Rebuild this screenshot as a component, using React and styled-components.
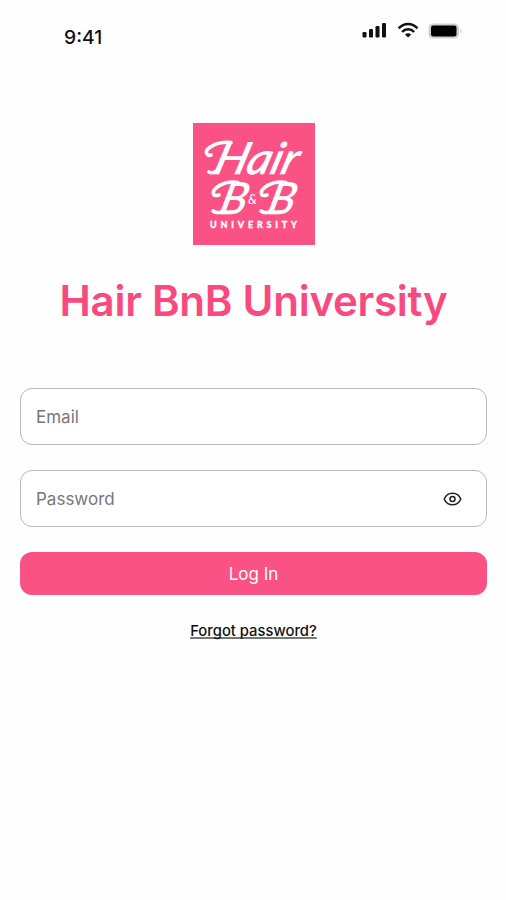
import React, { useState } from "react";
import styled, { createGlobalStyle } from "styled-components";

const GlobalStyle = createGlobalStyle`
  * {
    box-sizing: border-box;
  }

  body {
    margin: 0;
    background-color: #fefefe;
    font-family: Inter, "Liberation Sans", sans-serif;
  }
`;

const Screen = styled.main`
  display: flex;
  flex-direction: column;
  height: 900px;
  width: 506px;
  background-color: #fefefe;
`;

const StatusBar = styled.header`
  display: flex;
  justify-content: space-between;
  height: 123px;
  padding: 20px 44px 0 64px;
`;

const Clock = styled.div`
  padding-top: 5px;
  font-size: 19.3px;
  font-weight: 500;
  line-height: 24px;
  color: #111;
`;

const Brand = styled.div`
  display: flex;
  flex-direction: column;
  align-items: center;
  height: 265px;
  padding-left: 1px;

  h1 {
    margin: 30px 0 0;
    font-size: 42px;
    font-weight: 600;
    line-height: 52px;
    white-space: nowrap;
    letter-spacing: -0.25px;
    color: #f94a80;
  }
`;

const LoginForm = styled.form`
  display: flex;
  flex-direction: column;
  padding: 0 19px 0 20px;
`;

const Field = styled.label`
  display: flex;
  align-items: center;
  height: 57px;
  margin-bottom: 25px;
  padding: 0 24px 0 15px;
  border: 1px solid #b9b9b9;
  border-radius: 12px;
  background-color: #fff;

  input {
    flex: 1;
    min-width: 0;
    padding: 0;
    border: none;
    outline: none;
    background: none;
    font-family: inherit;
    font-size: 17px;
    color: #222;
  }

  input::placeholder {
    color: #777;
    opacity: 1;
  }
`;

const EyeButton = styled.button`
  display: flex;
  padding: 0;
  border: none;
  background: none;
`;

const LoginButton = styled.button`
  height: 42.5px;
  padding: 2px 0 0;
  border: none;
  border-radius: 12px;
  background-color: #fb5286;
  font-family: inherit;
  font-size: 17px;
  font-weight: 400;
  color: #fff;
`;

const ForgotLink = styled.a`
  align-self: center;
  margin-top: 26.5px;
  font-size: 14.8px;
  font-weight: 500;
  line-height: 20px;
  text-decoration: underline;
  text-decoration-color: #777;
  text-decoration-thickness: 1.5px;
  text-underline-offset: 1px;
  text-decoration-skip-ink: none;
  color: #111;
`;

const StatusIcons = () => (
  <svg width="100" height="22" viewBox="0 0 100 22" fill="none">
    {/* signal */}
    <g fill="#111">
      <rect x="0.5" y="12" width="4" height="5.5" rx="1.2" />
      <rect x="7" y="9" width="4" height="8.5" rx="1.2" />
      <rect x="13.5" y="6" width="4" height="11.5" rx="1.2" />
      <rect x="20" y="3" width="4" height="14.5" rx="1.2" />
    </g>
    {/* wifi */}
    <g stroke="#111" strokeWidth="2.5">
      <path d="M36.7 8.3C42 2.4 50.2 2.4 55.5 8.3" />
      <path d="M40.1 12C43.4 8.4 48.8 8.4 52.1 12" />
    </g>
    <path d="M43 14.4Q46.1 12 49.2 14.4L46.1 17.6Z" fill="#111" />
    {/* battery */}
    <rect x="66.5" y="3.5" width="30.5" height="15" rx="4.5" fill="#d0d0d0" />
    <rect x="69" y="5.4" width="25.5" height="11" rx="2.2" fill="#000" />
    <path d="M98 9v4c2-.8 2-3.2 0-4Z" fill="#d0d0d0" />
  </svg>
);

const Logo = () => (
  <svg width="122" height="122" viewBox="0 0 122 122" fill="#fff">
    <rect width="122" height="122" fill="#fb5286" />
    <g fontFamily="Lato, sans-serif" fontStyle="italic" fontWeight="400">
      <text
        transform="translate(19 50.5) skewX(-16)"
        fontSize="44"
        stroke="#fff"
        strokeWidth="0.7"
        textLength="83"
        lengthAdjust="spacingAndGlyphs"
      >
        Hair
      </text>
      <text transform="translate(25 90.5) skewX(-14)" fontSize="44" stroke="#fff" strokeWidth="0.7">
        B
      </text>
      <text x="55" y="81" fontSize="13" textLength="9" lengthAdjust="spacingAndGlyphs">
        &amp;
      </text>
      <text transform="translate(73 90.5) skewX(-14)" fontSize="44" stroke="#fff" strokeWidth="0.7">
        B
      </text>
    </g>
    {/* swashes */}
    <g stroke="#fff" strokeWidth="3.6" strokeLinecap="round" fill="none">
      <path d="M38 19.5C24 18 10 26 14 31Q15 33 18 32" />
      <path d="M24 47.5Q20 51 16 49" />
      <path d="M45 59.5C31 57 17 66 21 72Q22 73 26 72" />
      <path d="M29 88.5Q24 91 20 88" />
      <path d="M93 59.5C79 57 65 66 69 72Q70 73 74 72" />
      <path d="M77 88.5Q72 91 68 88" />
    </g>
    <text
      x="17"
      y="105"
      fontFamily="Lato, sans-serif"
      fontWeight="900"
      fontSize="9"
      stroke="#fff"
      strokeWidth="0.3"
      textLength="87"
    >
      UNIVERSITY
    </text>
  </svg>
);

const EyeIcon = () => (
  <svg width="19" height="16" viewBox="0 0 19 16" fill="none" stroke="#222" strokeWidth="1.5">
    <path d="M1.2 8C4.5 0.2 14.5 0.2 17.8 8C14.5 15.8 4.5 15.8 1.2 8Z" />
    <circle cx="9.5" cy="8" r="2.5" />
  </svg>
);

const App = () => {
  const [showPassword, setShowPassword] = useState(false);

  return (
    <Screen>
      <GlobalStyle />
      <StatusBar>
        <Clock>9:41</Clock>
        <StatusIcons />
      </StatusBar>
      <Brand>
        <Logo />
        <h1>Hair BnB University</h1>
      </Brand>
      <LoginForm onSubmit={(e) => e.preventDefault()}>
        <Field>
          <input type="email" placeholder="Email" />
        </Field>
        <Field>
          <input
            type={showPassword ? "text" : "password"}
            placeholder="Password"
          />
          <EyeButton
            type="button"
            onClick={() => setShowPassword(!showPassword)}
          >
            <EyeIcon />
          </EyeButton>
        </Field>
        <LoginButton type="submit">Log In</LoginButton>
        <ForgotLink href="#">Forgot password?</ForgotLink>
      </LoginForm>
    </Screen>
  );
};

export default App;
